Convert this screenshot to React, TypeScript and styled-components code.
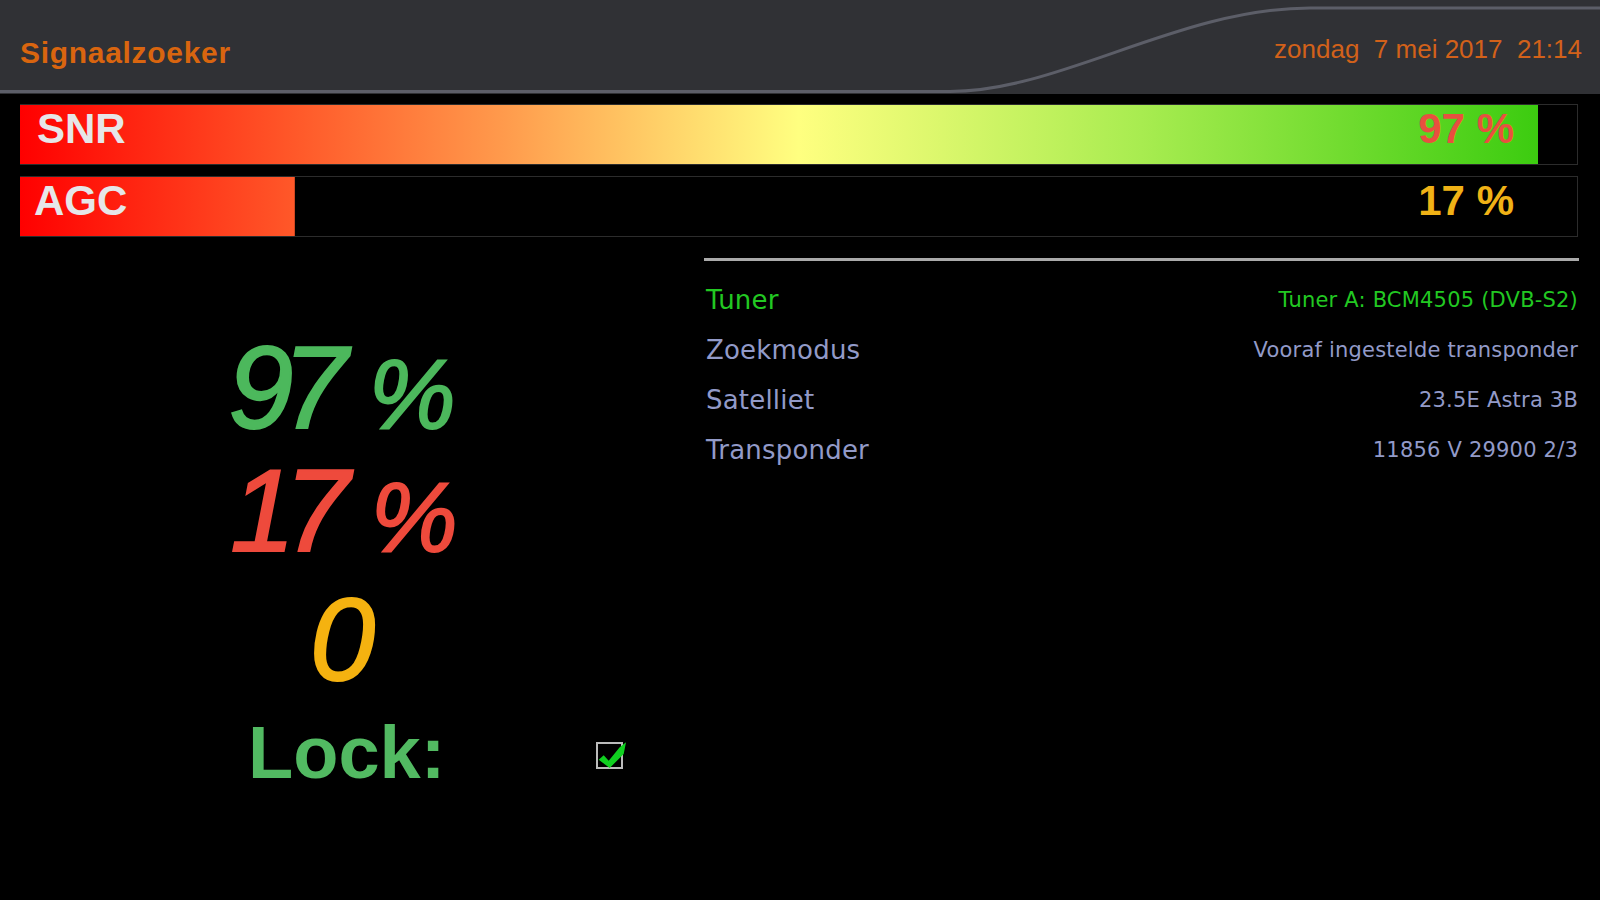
import React from "react";
import { createGlobalStyle, styled } from "styled-components";

const GlobalStyle = createGlobalStyle`
  html, body {
    margin: 0;
    height: 100%;
    background: #000;
    overflow: hidden;
    font-family: "Liberation Sans", Arial, sans-serif;
  }
`;

const Page = styled.div`
  width: 1600px;
  height: 900px;
  background: #000;
  display: flex;
  flex-direction: column;
`;

const Header = styled.header`
  position: relative;
  height: 94px;
  box-sizing: border-box;
  padding: 0 18px 0 20px;
  background: #303135;
  display: flex;
  justify-content: space-between;
  align-items: flex-start;
`;

const HeaderLine = styled.svg`
  position: absolute;
  left: 0;
  top: 0;
`;

const Title = styled.h1`
  margin: 34px 0 0;
  font-size: 30px;
  line-height: 37px;
  font-weight: 700;
  letter-spacing: 0.7px;
  color: #d9650f;
`;

const Clock = styled.div`
  margin-top: 34px;
  font-size: 26px;
  line-height: 30px;
  white-space: pre;
  color: #d2611a;
`;

const Bars = styled.section`
  display: flex;
  flex-direction: column;
  gap: 11px;
  padding: 10px 22px 0 20px;
`;

const Track = styled.div`
  position: relative;
  height: 61px;
  box-sizing: border-box;
  border: 1px solid #2c2c2c;
  border-left: none;
  display: flex;
  justify-content: space-between;
  align-items: center;
  padding: 0 63px 11px 15px;
  font-size: 42px;
  font-weight: 700;
`;

const Fill = styled.div`
  position: absolute;
  inset: 0;
  background: linear-gradient(
    to right,
    #ff0000 0%,
    #ff5a2a 18%,
    #ff9a4c 31%,
    #ffd068 41%,
    #ffff80 50%,
    #a8ec50 72%,
    #3ccc10 97.5%,
    #30c000 100%
  );
`;

const BarLabel = styled.span<{ $indent: number }>`
  position: relative;
  margin-left: ${(props) => props.$indent}px;
  color: #e6e6e8;
`;

const BarValue = styled.span<{ $color: string }>`
  position: relative;
  color: ${(props) => props.$color};
`;

const Content = styled.main`
  display: grid;
  grid-template-columns: 704px 875px;
  padding-top: 21px;
`;

const Meters = styled.div`
  display: flex;
  flex-direction: column;
  align-items: center;
  padding-top: 68px;
`;

const Reading = styled.div<{ $color: string; $height: number; $shift: number }>`
  display: flex;
  align-items: baseline;
  gap: 32px;
  margin-right: ${(props) => props.$shift}px;
  font-size: 117px;
  line-height: ${(props) => props.$height}px;
  font-style: italic;
  -webkit-text-stroke: 2px currentColor;
  color: ${(props) => props.$color};
`;

const Digits = styled.span`
  letter-spacing: -11px;
`;

const Percent = styled.span`
  font-size: 98px;
`;

const LockRow = styled.div`
  align-self: flex-start;
  display: flex;
  align-items: center;
  gap: 151px;
  margin: 4px 0 0 248px;
`;

const LockLabel = styled.span`
  font-size: 74px;
  line-height: 84px;
  font-weight: 700;
  color: #52ba62;
`;

const Info = styled.div`
  border-top: 3px solid #aaa;
  padding-top: 14px;
`;

const InfoRow = styled.div<{ $active?: boolean }>`
  height: 50px;
  display: flex;
  justify-content: space-between;
  align-items: center;
  padding: 0 1px 0 2px;
  font-family: "DejaVu Sans", sans-serif;
  color: ${(props) => (props.$active ? "#22c822" : "#929ac8")};
`;

const InfoName = styled.span`
  font-size: 26px;
  letter-spacing: 0.2px;
`;

const InfoValue = styled.span`
  font-size: 21px;
  letter-spacing: 0.2px;
`;

const bars = [
  { label: "SNR", value: "97 %", fill: 97.5, color: "#e8503f", indent: 2 },
  { label: "AGC", value: "17 %", fill: 17.65, color: "#f0b216", indent: -1 },
];

const rows = [
  { name: "Tuner", value: "Tuner A: BCM4505 (DVB-S2)", active: true },
  { name: "Zoekmodus", value: "Vooraf ingestelde transponder" },
  { name: "Satelliet", value: "23.5E Astra 3B" },
  { name: "Transponder", value: "11856 V 29900 2/3" },
];

function App() {
  return (
    <Page>
      <GlobalStyle />
      <Header>
        <HeaderLine width="1600" height="94" viewBox="0 0 1600 94">
          <path
            d="M0 91.5H950C1060 91.5 1180 8 1310 8H1600"
            fill="none"
            stroke="#5c5e68"
            strokeWidth="3"
          />
        </HeaderLine>
        <Title>Signaalzoeker</Title>
        <Clock>zondag  7 mei 2017  21:14</Clock>
      </Header>
      <Bars>
        {bars.map((bar) => (
          <Track key={bar.label}>
            <Fill style={{ clipPath: `inset(0 ${100 - bar.fill}% 0 0)` }} />
            <BarLabel $indent={bar.indent}>{bar.label}</BarLabel>
            <BarValue $color={bar.color}>{bar.value}</BarValue>
          </Track>
        ))}
      </Bars>
      <Content>
        <Meters>
          <Reading $color="#4cb85c" $height={124} $shift={20}>
            <Digits>97</Digits>
            <Percent>%</Percent>
          </Reading>
          <Reading $color="#ee4a3c" $height={110} $shift={16}>
            <Digits>17</Digits>
            <Percent>%</Percent>
          </Reading>
          <Reading $color="#f5b210" $height={135} $shift={30}>
            <Digits>0</Digits>
          </Reading>
          <LockRow>
            <LockLabel>Lock:</LockLabel>
            <svg width="32" height="32" viewBox="0 0 32 32">
              <rect x="1" y="6" width="25" height="25" fill="none" stroke="#bbb" strokeWidth="2" />
              <path d="M2.7 22.7L7.7 18.3 12.7 23.7 23.7 10.3 30 5.3 27.7 17 13.7 31z" fill="#10d020" />
            </svg>
          </LockRow>
        </Meters>
        <Info>
          {rows.map((row) => (
            <InfoRow key={row.name} $active={row.active}>
              <InfoName>{row.name}</InfoName>
              <InfoValue>{row.value}</InfoValue>
            </InfoRow>
          ))}
        </Info>
      </Content>
    </Page>
  );
}

export default App;
